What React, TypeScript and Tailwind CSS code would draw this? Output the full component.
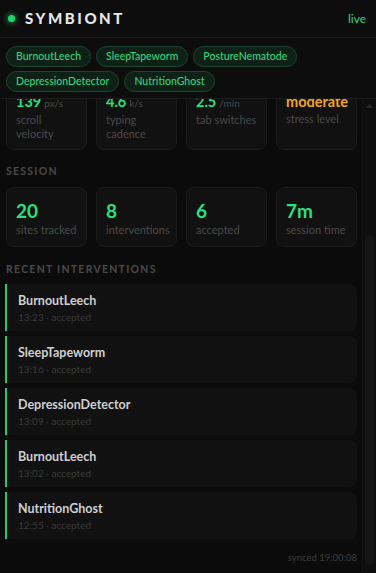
import React, { useEffect, useRef } from "react";

const parasites = ["BurnoutLeech", "SleepTapeworm", "PostureNematode", "DepressionDetector", "NutritionGhost"];

const signals = [
    { value: "139", unit: "px/s", label: "scroll velocity", amber: false },
    { value: "4.6", unit: "k/s", label: "typing cadence", amber: false },
    { value: "2.5", unit: "/min", label: "tab switches", amber: false },
    { value: "moderate", unit: "", label: "stress level", amber: true },
];

const session = [
    { value: "20", label: "sites tracked" },
    { value: "8", label: "interventions" },
    { value: "6", label: "accepted" },
    { value: "7m", label: "session time" },
];

const interventions = [
    { name: "BurnoutLeech", time: "13:23" },
    { name: "SleepTapeworm", time: "13:16" },
    { name: "DepressionDetector", time: "13:09" },
    { name: "BurnoutLeech", time: "13:02" },
    { name: "NutritionGhost", time: "12:55" },
];

function SectionLabel(props: { children: React.ReactNode; className?: string }) {
    return (
        <div className={`text-[10.5px] leading-[14px] font-bold tracking-[0.12em] text-[#4a4a4a] ${props.className ?? ""}`}>
            {props.children}
        </div>
    );
}

export default function App() {
    const scrollRef = useRef<HTMLDivElement>(null);

    useEffect(() => {
        // the popup was captured scrolled to the bottom
        if (scrollRef.current) scrollRef.current.scrollTop = scrollRef.current.scrollHeight;
    }, []);

    return (
        <div
            className="h-[573px] w-[376px] flex flex-col bg-[#0b0b0b] overflow-hidden"
            style={{ fontFamily: 'Lato, "Noto Sans", sans-serif' }}
        >
            <div className="shrink-0 bg-[#0d0d0d] border-b border-[#1c1c1c]">
                <div className="h-[38px] flex items-center justify-between pl-[8px] pr-[10px] border-b border-[#1c1c1c]">
                    <div className="flex items-center gap-[10px]">
                        <span className="w-[7px] h-[7px] rounded-full bg-[#22d66e] shadow-[0_0_6px_#22d66e]" />
                        <span className="text-[15px] font-black tracking-[0.17em] text-[#e6e6e6]">SYMBIONT</span>
                    </div>
                    <span className="text-[12px] text-[#2fd87a]">live</span>
                </div>
                <div className="flex flex-wrap gap-x-[5px] gap-y-[4px] px-[6px] pt-[8px] pb-[6px]">
                    {parasites.map((p) => (
                        <span
                            key={p}
                            className="h-[21px] px-[9px] flex items-center rounded-full bg-[#0e2117] border border-[#1d4430] text-[10.5px] font-medium text-[#33d47c]"
                        >
                            {p}
                        </span>
                    ))}
                </div>
            </div>

            <div className="flex-1 min-h-0 flex">
                <div ref={scrollRef} className="flex-1 overflow-hidden pl-[6px] pr-[5px]">
                    <SectionLabel className="mt-[12px] mb-[9px]">SIGNALS</SectionLabel>
                    <div className="grid grid-cols-4 gap-[9px]">
                        {signals.map((s) => (
                            <div key={s.label} className="rounded-[8px] bg-[#111111] border border-[#1b1b1b] pl-[9px] pr-[6px] pt-[12px] pb-[8px]">
                                <div className="leading-[20px] whitespace-nowrap">
                                    <span className={`text-[14.5px] font-bold ${s.amber ? "text-[#f2a516]" : "text-[#27e07e]"}`}>{s.value}</span>
                                    {s.unit && <span className="text-[10px] text-[#4b4b4b] ml-[3px]">{s.unit}</span>}
                                </div>
                                <div className="text-[11px] leading-[14px] text-[#4a4a4a]">{s.label}</div>
                            </div>
                        ))}
                    </div>

                    <SectionLabel className="mt-[14px] mb-[9px]">SESSION</SectionLabel>
                    <div className="grid grid-cols-4 gap-[9px]">
                        {session.map((s) => (
                            <div key={s.label} className="rounded-[8px] bg-[#111111] border border-[#1b1b1b] pl-[9px] pr-[4px] pt-[12px] pb-[8px]">
                                <div className="text-[19px] leading-[22px] font-bold text-[#27e07e]">{s.value}</div>
                                <div className="text-[11px] leading-[16px] text-[#4a4a4a] whitespace-nowrap">{s.label}</div>
                            </div>
                        ))}
                    </div>

                    <SectionLabel className="mt-[15px] mb-[8px]">RECENT INTERVENTIONS</SectionLabel>
                    <div className="flex flex-col gap-[5px] -ml-[1px]">
                        {interventions.map((item, i) => (
                            <div key={i} className="rounded-r-[8px] bg-[#111111] border-l-2 border-[#22c872] pl-[11px] pt-[8px] pb-[7px]">
                                <div className="text-[12.5px] leading-[18px] font-bold text-[#cfcfcf]">{item.name}</div>
                                <div className="text-[10px] leading-[14px] text-[#3a3a3a]">{item.time} · accepted</div>
                            </div>
                        ))}
                    </div>

                    <div className="mt-[12px] pb-[8px] text-right text-[9.5px] leading-[14px] text-[#3e3e3e]">synced 19:00:08</div>
                </div>

                {/* scrollbar */}
                <div className="w-[14px] shrink-0 bg-[#0e0e0e] border-l border-[#141414] flex flex-col items-center pt-[5px] pb-[8px]">
                    <svg width="7" height="4" viewBox="0 0 7 4" className="shrink-0">
                        <path d="M0 4 L3.5 0 L7 4 Z" fill="#2a2a2a" />
                    </svg>
                    <div className="flex-1" />
                    <div className="w-[9px] h-[330px] rounded-full bg-[#161616]" />
                </div>
            </div>
        </div>
    );
}
